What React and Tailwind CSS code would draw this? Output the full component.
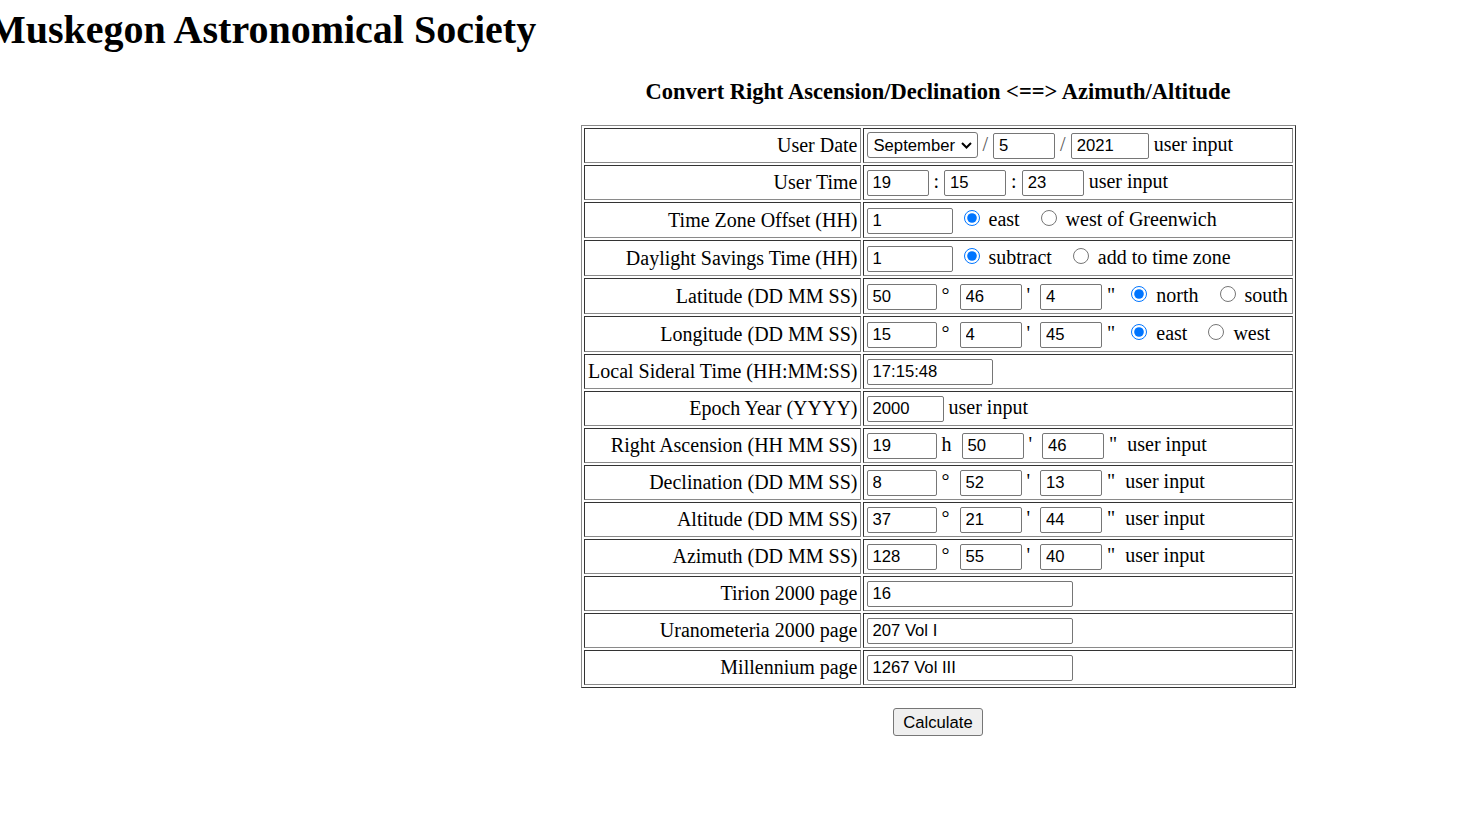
import React from "react";

const SANS = "font-['Liberation_Sans',Arial,sans-serif]";

function Box({ v, w }) {
  return (
    <input
      type="text"
      defaultValue={v}
      className={`${w} h-[26px] border border-[#767676] rounded-[2px] pl-[5px] pr-[3px] bg-white text-black text-[16.67px] ${SANS} align-baseline outline-none`}
    />
  );
}

function Radio({ name, checked }) {
  return (
    <input
      type="radio"
      name={name}
      defaultChecked={checked}
      className="w-[16px] h-[16px] ml-[6px] mr-[4px] mt-[4px] accent-[#0075ff] align-baseline"
    />
  );
}

function Select() {
  return (
    <span
      className={`inline-flex items-center justify-between w-[111px] h-[26px] border border-[#767676] rounded-[3px] pl-[6px] pr-[5px] bg-white text-[16.67px] ${SANS} align-baseline`}
    >
      <span>September</span>
      <svg width="11" height="7" viewBox="0 0 11 7" className="mt-[1px]">
        <path d="M1 1 L5.5 5.5 L10 1" fill="none" stroke="#000" strokeWidth="2" />
      </svg>
    </span>
  );
}

const Slash = () => <span className="text-[#555]">/</span>;

function Row({ label, tall, children }) {
  const h = tall ? "h-[36px]" : "h-[35px]";
  return (
    <tr>
      <td
        className={`${h} w-[277px] border border-t-[#333] border-l-[#333] border-r-[#8a8a8a] border-b-[#8a8a8a] text-right px-[2px] align-middle whitespace-nowrap`}
      >
        {label}
      </td>
      <td
        className={`${h} w-[430px] border border-t-[#333] border-l-[#333] border-r-[#8a8a8a] border-b-[#8a8a8a] text-left pl-[3px] pr-[1px] align-middle whitespace-nowrap`}
      >
        {children}
      </td>
    </tr>
  );
}

export default function App() {
  return (
    <div className="min-h-[818px] w-full bg-white text-black font-['Liberation_Serif','Times_New_Roman',serif] overflow-hidden">
      <h1 className="text-[40px] font-bold leading-[46px] pt-[7px] -ml-[12px] whitespace-nowrap">
        Muskegon Astronomical Society
      </h1>
      <div className="flex">
        <div className="w-[403px] shrink-0" />
        <div className="flex-1 flex flex-col items-center">
          <div className="mt-[26px] text-[22.5px] leading-[26px] font-bold whitespace-nowrap">
            Convert Right Ascension/Declination &lt;==&gt; Azimuth/Altitude
          </div>
          <table className="mt-[20px] border-separate border-spacing-[2px] border border-t-[#8a8a8a] border-l-[#8a8a8a] border-r-[#333] border-b-[#333] text-[20px] leading-[23px]">
            <tbody>
              <Row label="User Date">
                <Select />
                {" "}
                <Slash />
                {" "}
                <Box v="5" w="w-[62px]" />
                {" "}
                <Slash />
                {" "}
                <Box v="2021" w="w-[78px]" />
                {" user input"}
              </Row>
              <Row label="User Time">
                <Box v="19" w="w-[62px]" />
                {" : "}
                <Box v="15" w="w-[62px]" />
                {" : "}
                <Box v="23" w="w-[62px]" />
                {" user input"}
              </Row>
              <Row label="Time Zone Offset (HH)" tall>
                <Box v="1" w="w-[86px]" />
                {" "}
                <Radio name="tz" checked />
                {" east \u00a0 "}
                <Radio name="tz" />
                {" west of Greenwich"}
              </Row>
              <Row label="Daylight Savings Time (HH)" tall>
                <Box v="1" w="w-[86px]" />
                {" "}
                <Radio name="dst" checked />
                {" subtract \u00a0 "}
                <Radio name="dst" />
                {" add to time zone"}
              </Row>
              <Row label="Latitude (DD MM SS)" tall>
                <Box v="50" w="w-[70px]" />
                {" \u00b0\u00a0 "}
                <Box v="46" w="w-[62px]" />
                {" '\u00a0 "}
                <Box v="4" w="w-[62px]" />
                {" \"\u00a0 "}
                <Radio name="ns" checked />
                {" north \u00a0 "}
                <Radio name="ns" />
                {" south"}
              </Row>
              <Row label="Longitude (DD MM SS)" tall>
                <Box v="15" w="w-[70px]" />
                {" \u00b0\u00a0 "}
                <Box v="4" w="w-[62px]" />
                {" '\u00a0 "}
                <Box v="45" w="w-[62px]" />
                {" \"\u00a0 "}
                <Radio name="ew" checked />
                {" east \u00a0 "}
                <Radio name="ew" />
                {" west"}
              </Row>
              <Row label="Local Sideral Time (HH:MM:SS)">
                <Box v="17:15:48" w="w-[126px]" />
              </Row>
              <Row label="Epoch Year (YYYY)">
                <Box v="2000" w="w-[77px]" />
                {" user input"}
              </Row>
              <Row label="Right Ascension (HH MM SS)">
                <Box v="19" w="w-[70px]" />
                {" h\u00a0 "}
                <Box v="50" w="w-[62px]" />
                {" '\u00a0 "}
                <Box v="46" w="w-[62px]" />
                {" \"\u00a0 user input"}
              </Row>
              <Row label="Declination (DD MM SS)">
                <Box v="8" w="w-[70px]" />
                {" \u00b0\u00a0 "}
                <Box v="52" w="w-[62px]" />
                {" '\u00a0 "}
                <Box v="13" w="w-[62px]" />
                {" \"\u00a0 user input"}
              </Row>
              <Row label="Altitude (DD MM SS)">
                <Box v="37" w="w-[70px]" />
                {" \u00b0\u00a0 "}
                <Box v="21" w="w-[62px]" />
                {" '\u00a0 "}
                <Box v="44" w="w-[62px]" />
                {" \"\u00a0 user input"}
              </Row>
              <Row label="Azimuth (DD MM SS)">
                <Box v="128" w="w-[70px]" />
                {" \u00b0\u00a0 "}
                <Box v="55" w="w-[62px]" />
                {" '\u00a0 "}
                <Box v="40" w="w-[62px]" />
                {" \"\u00a0 user input"}
              </Row>
              <Row label="Tirion 2000 page">
                <Box v="16" w="w-[206px]" />
              </Row>
              <Row label="Uranometeria 2000 page">
                <Box v="207 Vol I" w="w-[206px]" />
              </Row>
              <Row label="Millennium page">
                <Box v="1267 Vol III" w="w-[206px]" />
              </Row>
            </tbody>
          </table>
          <button
            type="button"
            className={`mt-[20px] w-[90px] h-[28px] bg-[#efefef] border border-[#767676] rounded-[3px] text-[16.67px] text-black ${SANS}`}
          >
            Calculate
          </button>
        </div>
      </div>
    </div>
  );
}
